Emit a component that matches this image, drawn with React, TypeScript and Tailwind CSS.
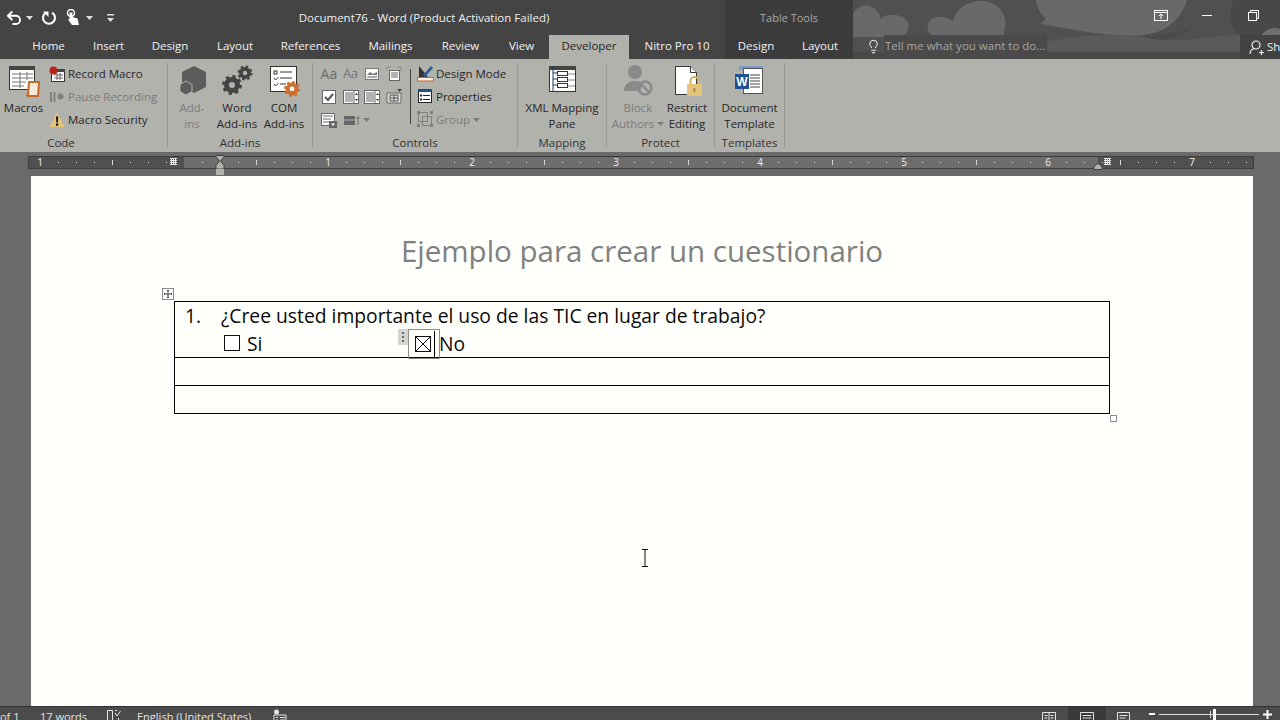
import { Undo2, Lightbulb } from 'lucide-react'
import type { ReactNode } from 'react'

const mainTabs = [
  { label: 'Home', width: 'w-[63px]' },
  { label: 'Insert', width: 'w-[57px]' },
  { label: 'Design', width: 'w-[66px]' },
  { label: 'Layout', width: 'w-[64px]' },
  { label: 'References', width: 'w-[87px]' },
  { label: 'Mailings', width: 'w-[73px]' },
  { label: 'Review', width: 'w-[67px]' },
  { label: 'View', width: 'w-[55px]' },
]

function Caret({ className = 'text-[#dddddd]' }: { className?: string }) {
  return (
    <svg width="7" height="4" viewBox="0 0 7 4" className={className}>
      <path d="M0 0h7L3.5 4z" fill="currentColor" />
    </svg>
  )
}

function Gear({ cx, cy, r, color }: { cx: number; cy: number; r: number; color: string }) {
  const outer = r * 0.82
  const dash = (2 * Math.PI * outer) / 16
  return (
    <g fill="none" stroke={color}>
      <circle cx={cx} cy={cy} r={r * 0.55} strokeWidth={r * 0.5} />
      <circle cx={cx} cy={cy} r={outer} strokeWidth={r * 0.36} strokeDasharray={`${dash} ${dash}`} />
    </g>
  )
}

function Icon({ w = 32, h = 32, children }: { w?: number; h?: number; children: ReactNode }) {
  return (
    <svg width={w} height={h} viewBox={`0 0 ${w} ${h}`} className="shrink-0">
      {children}
    </svg>
  )
}

function MacrosIcon() {
  return (
    <Icon w={34} h={32}>
      <rect x="2.500" y="1.500" width="25" height="23" fill="#fff" stroke="#333" />
      <rect x="2" y="1" width="26" height="4" fill="#444" />
      <path d="M5 9h21M5 13h21M5 17h14M5 21h12M13 7v16M20 7v8" stroke="#777" />
      <path d="M22 17h10l-1 14H21z" fill="#f6ead8" stroke="#c46a2c" strokeWidth="2" />
      <path d="M19 29h3v2h-3z" fill="#c46a2c" />
    </Icon>
  )
}

function RecordIcon() {
  return (
    <Icon w={16} h={16}>
      <rect x="2.500" y="3.500" width="13" height="12" fill="#fff" stroke="#333" />
      <rect x="2" y="3" width="14" height="3" fill="#444" />
      <path d="M5 9h9M5 12h9M8 7v7M11 7v7" stroke="#666" />
      <circle cx="4.500" cy="4.500" r="4" fill="#b3261e" />
    </Icon>
  )
}

function PauseIcon() {
  return (
    <Icon w={16} h={16}>
      <path d="M1 3h2v10H1zM4.500 3h2v10h-2z" fill="#808080" />
      <circle cx="11.500" cy="7.500" r="3" fill="#808080" />
    </Icon>
  )
}

function WarningIcon() {
  return (
    <Icon w={16} h={16}>
      <path d="M8 0.500l7.500 14.500H0.500z" fill="#e3c27b" />
      <path d="M7 4.500h2.200l-.3 6H7.300zM7 11.500h2.200v2.200H7z" fill="#111" />
    </Icon>
  )
}

function AddinsIcon() {
  return (
    <Icon>
      <path d="M18 1l12 6v15l-12 6-12-6V7z" fill="#5c5c5c" />
      <path d="M10 16l6 3.500v7L10 30l-6-3.500v-7z" fill="#5c5c5c" stroke="#b2b2ad" />
    </Icon>
  )
}

function WordAddinsIcon() {
  return (
    <Icon>
      <Gear cx={11} cy={20} r={10} color="#444" />
      <Gear cx={24} cy={8} r={7.500} color="#444" />
    </Icon>
  )
}

function ComAddinsIcon() {
  return (
    <Icon>
      <rect x="2.500" y="1.500" width="26" height="25" fill="#fff" stroke="#333" />
      <rect x="6" y="6" width="3" height="3" fill="none" stroke="#333" />
      <path d="M12 7h12M12 13h12M12 19h6M6 13l1.500 2 3-3M6 19l1.500 2 3-3" stroke="#333" fill="none" />
      <Gear cx={24} cy={24} r={8} color="#cc6f2e" />
    </Icon>
  )
}

function SmallDoc({ kind }: { kind: number }) {
  if (kind === 0) return <span className="text-[14px] leading-none text-[#6a6a6a]">Aa</span>
  if (kind === 1) return <span className="text-[13px] font-light leading-none text-[#555555]">Aa</span>
  if (kind === 2)
    return (
      <Icon w={16} h={16}>
        <rect x="1.500" y="2.500" width="13" height="11" fill="#fff" stroke="#777" />
        <path d="M3 9l3-3 3 2 4-2v3H3z" fill="#777" />
        <path d="M3 10h10v2H3z" fill="#aaa" />
      </Icon>
    )
  if (kind === 3)
    return (
      <Icon w={16} h={16}>
        <rect x="3.500" y="4.500" width="10" height="10" fill="#fff" stroke="#666" />
        <path d="M5 7h7M5 9h7M5 11h7" stroke="#666" />
        <path d="M1 5V1h4M11 1h4v4" stroke="#888" fill="none" />
      </Icon>
    )
  if (kind === 4)
    return (
      <Icon w={16} h={16}>
        <rect x="1.500" y="1.500" width="13" height="13" fill="#fff" stroke="#666" />
        <path d="M4 8l3 3 5-6" stroke="#555" strokeWidth="2" fill="none" />
      </Icon>
    )
  if (kind === 5 || kind === 6)
    return (
      <Icon w={16} h={16}>
        <rect x="0.500" y="1.500" width="15" height="13" fill="#fff" stroke="#666" />
        <path d="M2 4h8M2 6h8M2 8h8M2 10h8M2 12h8M11 2v12" stroke="#666" />
        <path d="M12 6l1.500-2L15 6zM12 10l1.500 2L15 10z" fill="#333" />
      </Icon>
    )
  if (kind === 7)
    return (
      <Icon w={16} h={16}>
        <path d="M1 4h14v10H1z" fill="#ddd" stroke="#666" />
        <path d="M4 6h8v6H4zM8 6v6M4 9h8" stroke="#555" fill="none" />
        <path d="M11 0h5l-2.500 3z" fill="#444" />
      </Icon>
    )
  if (kind === 8)
    return (
      <Icon w={18} h={16}>
        <rect x="1.500" y="1.500" width="13" height="12" fill="#fff" stroke="#666" />
        <path d="M3 4h10M3 7h8M3 10h6" stroke="#666" />
        <rect x="9" y="9" width="8" height="7" fill="#666" />
        <path d="M11 11.500h4L13 14z" fill="#fff" />
      </Icon>
    )
  return (
    <Icon w={18} h={16}>
      <rect x="1" y="4" width="11" height="9" rx="1" fill="#666" />
      <path d="M4 4V2h5v2M1 8h11" stroke="#b2b2ad" fill="none" />
      <path d="M15 13V5M13.500 7L15 4.500 16.500 7" stroke="#777" fill="none" />
    </Icon>
  )
}

function DesignModeIcon() {
  return (
    <Icon w={17} h={17}>
      <path d="M2 1v11h9z" fill="#333" />
      <path d="M6 10L14 1l2 2-8 9z" fill="#2a5d9a" />
      <rect x="0.500" y="12.500" width="16" height="3.500" fill="#f5ede0" stroke="#c46a2c" />
    </Icon>
  )
}

function PropertiesIcon() {
  return (
    <Icon w={17} h={17}>
      <rect x="1.500" y="1.500" width="13" height="13" fill="#fff" stroke="#222" />
      <rect x="1" y="1" width="14" height="3" fill="#1e4e86" />
      <path d="M6 7.500h7M6 11.500h7" stroke="#222" />
      <rect x="3" y="6.500" width="2" height="2" fill="#222" />
      <rect x="3" y="10.500" width="2" height="2" fill="#222" />
    </Icon>
  )
}

function GroupIcon() {
  return (
    <Icon w={17} h={17}>
      <rect x="1.500" y="1.500" width="9" height="9" fill="none" stroke="#808080" />
      <rect x="5.500" y="5.500" width="9" height="9" fill="none" stroke="#808080" />
      <path d="M0 0h3v3H0zM13 13h3v3h-3zM13 0h3v3h-3zM0 13h3v3H0z" fill="#808080" />
    </Icon>
  )
}

function XmlIcon() {
  return (
    <Icon w={30} h={30}>
      <rect x="2.500" y="1.500" width="26" height="25" fill="#fff" stroke="#333" />
      <rect x="2" y="1" width="27" height="4" fill="#444" />
      <path d="M6 1v25M6 8h4M6 14h4M6 20h4" stroke="#173a5e" />
      <rect x="10.500" y="6.500" width="10" height="4" fill="#fff" stroke="#173a5e" />
      <rect x="10.500" y="12.500" width="10" height="4" fill="#fff" stroke="#173a5e" />
      <rect x="10.500" y="18.500" width="10" height="4" fill="#fff" stroke="#173a5e" />
      <path d="M21 9h7M21 15h7M21 21h7" stroke="#888" />
    </Icon>
  )
}

function BlockIcon() {
  return (
    <Icon>
      <circle cx="13" cy="7" r="7" fill="#8a8a8a" />
      <path d="M2 26c0-7 5-10 11-10 4 0 7 1 8 3l-3 7z" fill="#8a8a8a" />
      <circle cx="23" cy="23" r="6.500" fill="none" stroke="#8a8a8a" strokeWidth="2.500" />
      <path d="M18.500 18.500l9 9" stroke="#8a8a8a" strokeWidth="2.500" />
    </Icon>
  )
}

function RestrictIcon() {
  return (
    <Icon>
      <path d="M4.500 1.500h15l6 6v22h-21z" fill="#fff" stroke="#333" />
      <path d="M19.500 1.500v6h6" fill="#fff" stroke="#333" />
      <rect x="16" y="19" width="15" height="12" fill="#e3c27b" />
      <path d="M19.500 19v-3a4 4 0 0 1 8 0v3" fill="none" stroke="#d2b26b" strokeWidth="2" />
      <rect x="22.500" y="23" width="2" height="4" fill="#a58846" />
    </Icon>
  )
}

function TemplateIcon() {
  return (
    <Icon>
      <rect x="5" y="1" width="24" height="4" fill="#7e9ccb" />
      <rect x="9.500" y="3.500" width="19" height="25" fill="#fff" stroke="#555" />
      <path d="M16 10h10M16 13h10M16 16h10M16 19h10M16 22h10" stroke="#444" />
      <rect x="1" y="9" width="14" height="15" fill="#234f93" />
      <text x="8" y="21" textAnchor="middle" fontSize="12" fontWeight="700" fill="#fff" fontFamily="'Liberation Sans', sans-serif">
        W
      </text>
    </Icon>
  )
}

function Sep() {
  return <div className="mt-[4px] h-[84px] w-px shrink-0 bg-[#989894]" />
}

function Group({ width, label, labelClass = 'text-center', children }: { width: string; label: string; labelClass?: string; children: ReactNode }) {
  return (
    <div className={`flex shrink-0 flex-col ${width}`}>
      <div className="flex h-[76px]">{children}</div>
      <div className={`h-[16px] text-[11.5px] leading-[16px] text-[#333333] ${labelClass}`}>{label}</div>
    </div>
  )
}

function TallButton({ width, icon, lines, disabled, caret }: { width: string; icon: ReactNode; lines: string[]; disabled?: boolean; caret?: boolean }) {
  return (
    <div className={`flex shrink-0 flex-col items-center ${width}`}>
      <div className="flex h-[41px] items-start justify-center pt-[6px]">{icon}</div>
      <div className={`text-center text-[11.5px] leading-[16px] whitespace-nowrap ${disabled ? 'text-[#7b7b7b]' : 'text-[#262626]'}`}>
        {lines.map((line, i) => (
          <div key={line} className="flex items-center justify-center gap-[3px]">
            {line}
            {caret && i === lines.length - 1 && <Caret className="text-[#7b7b7b]" />}
          </div>
        ))}
      </div>
    </div>
  )
}

function SmallRow({ icon, label, disabled, caret }: { icon: ReactNode; label: string; disabled?: boolean; caret?: boolean }) {
  return (
    <div className={`flex h-[23px] items-center text-[11.5px] whitespace-nowrap ${disabled ? 'text-[#7b7b7b]' : 'text-[#262626]'}`}>
      <span className="flex w-[19px] shrink-0 items-center">{icon}</span>
      {label}
      {caret && <Caret className="ml-[3px] text-[#7b7b7b]" />}
    </div>
  )
}

function TitleBackdrop() {
  return (
    <svg width="427" height="59" viewBox="853 0 427 59" className="absolute top-0 left-[853px]">
      <rect x="853" y="0" width="427" height="59" fill="#505050" />
      <g fill="#696969">
        <path d="M853 14c4-9 17-12 24-3 3 3 4 5 3 8 8-7 24-5 28 4 2 7-2 12-8 14H853z" />
        <path d="M931 35c-7-8-2-19 8-18 7 0 11 2 14 4 3-13 16-21 31-20 15 2 24 14 21 28l-2 6z" />
        <path d="M1036 0c1 8 4 14 10 18l-5 6 40 7c20 3 42 6 62 4 22-2 38-15 44-35z" />
      </g>
      <path d="M1146 34c14 2 30 0 41-5 3 0 0 3-4 5-10 5-24 6-37 3z" fill="#4a4a4a" />
      <path d="M1030 46c40-12 90-14 130-6 30 3 60-8 120-7v26H853v-6c70-5 120-4 177-7z" fill="#5a5a5a" />
      <circle cx="1258" cy="14" r="28" fill="#484848" />
      <path d="M1258 42c4-12 14-16 22-13v13z" fill="#707070" />
      <rect x="853" y="52" width="427" height="7" fill="#484848" />
    </svg>
  )
}

function Ruler() {
  const ticks = Array.from({ length: 68 }, (_, i) => i - 8)
    .filter((k) => k % 8 !== 0)
    .map((k) => ({ x: 156 + k * 18, tall: k % 8 === 4 || k % 8 === -4 }))
  const numbers = [
    { n: 1, x: 12 },
    { n: 1, x: 300 },
    { n: 2, x: 444 },
    { n: 3, x: 588 },
    { n: 4, x: 732 },
    { n: 5, x: 876 },
    { n: 6, x: 1020 },
    { n: 7, x: 1164 },
  ]
  return (
    <div className="relative ml-[28px] flex h-[13px] w-[1226px] border border-[#3e3e3e]">
      <div className="w-[155px] bg-[#505050]" />
      <div className="w-[914px] bg-[#6d6d6d]" />
      <div className="flex-1 bg-[#505050]" />
      <svg width="1226" height="13" className="absolute -top-px -left-px">
        {ticks.map((t) =>
          t.tall ? (
            <rect key={t.x} x={t.x} y="4" width="1" height="5" fill="#dddddd" />
          ) : (
            <rect key={t.x} x={t.x} y="6" width="1" height="1" fill="#dddddd" />
          ),
        )}
        <path d="M142 2.500h7M142 4.500h7M142 6.500h7M142 8.500h7M143.500 2v7M145.500 2v7M147.500 2v7" stroke="#e8e8e8" />
        <path d="M1076 2.500h7M1076 4.500h7M1076 6.500h7M1076 8.500h7M1077.500 2v7M1079.500 2v7M1081.500 2v7" stroke="#e8e8e8" />
      </svg>
      {numbers.map((item) => (
        <span
          key={item.x}
          className="absolute top-[-1px] w-[10px] text-center text-[10px] leading-[12px] text-[#f0f0f0]"
          style={{ left: item.x - 6 }}
        >
          {item.n}
        </span>
      ))}
      <svg width="10" height="21" viewBox="0 0 10 21" className="absolute top-[-2px] left-[186px]">
        <path d="M1 .5h8V2L5.500 6 9 10.500V14H1v-3.500L4.500 6 1 2z" fill="#b2b2ad" stroke="#444" />
        <rect x="1" y="14" width="8" height="6" fill="#b2b2ad" />
      </svg>
      <svg width="10" height="7" viewBox="0 0 10 7" className="absolute top-[6px] left-[1064px]">
        <path d="M5 .5L9 3.500v3H1v-3z" fill="#b2b2ad" stroke="#444" />
      </svg>
    </div>
  )
}

function StatusIcon({ children, active }: { children: ReactNode; active?: boolean }) {
  return <div className={`flex h-[22px] w-[38px] items-start justify-center pt-[4px] ${active ? 'bg-[#3a3a3a]' : ''}`}>{children}</div>
}

export default function App() {
  return (
    <div className="flex h-[720px] w-[1280px] flex-col overflow-hidden bg-[#6a6a6a] font-['Open_Sans',sans-serif]">
      <header className="relative h-[59px] shrink-0 bg-[#444444]">
        <TitleBackdrop />
        <div className="relative flex h-[35px]">
          <div className="flex w-[298px] shrink-0 items-center text-white">
            <Undo2 size={18} strokeWidth={2.500} className="ml-[5px]" />
            <Caret className="ml-[3px] text-[#e0e0e0]" />
            <svg width="16" height="16" viewBox="0 0 16 16" className="ml-[8px]">
              <path d="M5 2.600A6 6 0 1 0 11 2.600" fill="none" stroke="currentColor" strokeWidth="2" />
              <path d="M2 1.500h5.500V7z" fill="currentColor" />
            </svg>
            <svg width="14" height="17" viewBox="0 0 14 17" className="ml-[9px]">
              <circle cx="5" cy="4" r="3.500" fill="none" stroke="currentColor" strokeWidth="1.500" />
              <path d="M3.500 3.500h3V8l5 1.500L13 16H6L2 10.500l1.500-.5z" fill="currentColor" />
            </svg>
            <Caret className="ml-[6px] text-[#e0e0e0]" />
            <svg width="7" height="8" viewBox="0 0 7 8" className="ml-[14px] text-[#e0e0e0]">
              <path d="M0 0h7v1.500H0zM0 4h7L3.500 8z" fill="currentColor" />
            </svg>
          </div>
          <div className="w-[252px] shrink-0 pt-[9px] text-center text-[11.5px] leading-[17px] whitespace-nowrap text-[#f0f0f0]">
            Document76 - Word (Product Activation Failed)
          </div>
          <div className="w-[175px] shrink-0" />
          <div className="w-[128px] shrink-0 bg-[#3c3c3c] pt-[9px] text-center text-[11px] leading-[17px] text-[#a8a8a8]">Table Tools</div>
          <div className="flex flex-1 items-start justify-end pr-[4px] pt-[7px] text-white">
            <div className="flex w-[46px] justify-center">
              <svg width="14" height="11" viewBox="0 0 14 11" className="mt-[3px]">
                <rect x=".5" y=".5" width="13" height="10" fill="none" stroke="currentColor" />
                <path d="M0 2.500h14M7 9V4.500M5 6l2-2 2 2" fill="none" stroke="currentColor" />
              </svg>
            </div>
            <div className="flex w-[46px] justify-center">
              <span className="mt-[8px] h-px w-[10px] bg-white" />
            </div>
            <div className="flex w-[46px] justify-center">
              <svg width="11" height="11" viewBox="0 0 11 11" className="mt-[3px]">
                <rect x=".5" y="2.500" width="8" height="8" fill="none" stroke="currentColor" />
                <path d="M2.500 2.500v-2h8v8h-2" fill="none" stroke="currentColor" />
              </svg>
            </div>
          </div>
        </div>
        <div className="relative flex h-[24px] pl-[17px] text-[11.5px] leading-[22px] text-[#f2f2f2]">
          {mainTabs.map((tab) => (
            <div key={tab.label} className={`shrink-0 text-center ${tab.width}`}>
              {tab.label}
            </div>
          ))}
          <div className="w-[80px] shrink-0 bg-[#b2b2ad] text-center text-[#262626]">Developer</div>
          <div className="w-[96px] shrink-0 text-center">Nitro Pro 10</div>
          <div className="flex w-[128px] shrink-0 bg-[#3c3c3c]">
            <div className="w-[62px] text-center">Design</div>
            <div className="w-[66px] text-center">Layout</div>
          </div>
          <div className="flex w-[390px] shrink-0 items-start pl-[13px]">
            <Lightbulb size={15} strokeWidth={1.600} className="mt-[4px] shrink-0" />
            <div className="ml-[3px] h-[24px] w-[163px] bg-[#4a4a4a] pl-[1px] whitespace-nowrap text-[#a6a6a6]">Tell me what you want to do...</div>
            <div className="flex-1" />
          </div>
          <div className="ml-[-3px] flex h-[24px] w-[40px] shrink-0 items-center overflow-hidden bg-[#424242] pl-[9px]">
            <svg width="15" height="15" viewBox="0 0 15 15" className="shrink-0">
              <circle cx="7" cy="5" r="4" fill="none" stroke="currentColor" strokeWidth="1.200" />
              <path d="M1 14c0-3 2-5 4.500-5.500M10 12.500h5M12.500 10v5" fill="none" stroke="currentColor" strokeWidth="1.200" />
            </svg>
            <span className="ml-[3px]">Share</span>
          </div>
        </div>
      </header>

      <div className="flex h-[93px] shrink-0 bg-[#b2b2ad]">
        <Group width="w-[167px]" label="Code" labelClass="w-[122px] text-center">
          <TallButton width="w-[47px]" lines={['Macros']} icon={<MacrosIcon />} />
          <div className="ml-[2px] flex flex-col pt-[3px]">
            <SmallRow icon={<RecordIcon />} label="Record Macro" />
            <SmallRow icon={<PauseIcon />} label="Pause Recording" disabled />
            <SmallRow icon={<WarningIcon />} label="Macro Security" />
          </div>
        </Group>
        <Sep />
        <Group width="w-[144px]" label="Add-ins">
          <div className="flex pl-[4px]">
            <TallButton width="w-[40px]" lines={['Add-', 'ins']} icon={<AddinsIcon />} disabled />
            <TallButton width="w-[46px] ml-[2px]" lines={['Word', 'Add-ins']} icon={<WordAddinsIcon />} />
            <TallButton width="w-[46px] ml-[1px]" lines={['COM', 'Add-ins']} icon={<ComAddinsIcon />} />
          </div>
        </Group>
        <Sep />
        <Group width="w-[204px]" label="Controls">
          <div className="grid h-[72px] w-[92px] shrink-0 grid-cols-4 grid-rows-3 pl-[5px] pt-[3px]">
            {[0, 1, 2, 3, 4, 5, 6, 7, 8, 9].map((kind) => (
              <div key={kind} className="flex items-center justify-center">
                {kind === 9 ? (
                  <span className="ml-[12px] flex items-center gap-[2px]">
                    <SmallDoc kind={kind} />
                    <Caret className="text-[#7b7b7b]" />
                  </span>
                ) : (
                  <SmallDoc kind={kind} />
                )}
              </div>
            ))}
          </div>
          <div className="mt-[10px] ml-[5px] h-[55px] w-px bg-[#444444]" />
          <div className="ml-[6px] flex flex-col pt-[3px]">
            <SmallRow icon={<DesignModeIcon />} label="Design Mode" />
            <SmallRow icon={<PropertiesIcon />} label="Properties" />
            <SmallRow icon={<GroupIcon />} label="Group" disabled caret />
          </div>
        </Group>
        <Sep />
        <Group width="w-[88px]" label="Mapping">
          <TallButton width="w-[88px]" lines={['XML Mapping', 'Pane']} icon={<XmlIcon />} />
        </Group>
        <Sep />
        <Group width="w-[107px]" label="Protect">
          <div className="flex pl-[4px]">
            <TallButton width="w-[54px]" lines={['Block', 'Authors']} icon={<BlockIcon />} disabled caret />
            <TallButton width="w-[44px]" lines={['Restrict', 'Editing']} icon={<RestrictIcon />} />
          </div>
        </Group>
        <Sep />
        <Group width="w-[69px]" label="Templates">
          <TallButton width="w-[69px]" lines={['Document', 'Template']} icon={<TemplateIcon />} />
        </Group>
        <Sep />
      </div>

      <div className="flex h-[24px] shrink-0 items-start pt-[4px]">
        <Ruler />
      </div>

      <div className="flex h-[530px] shrink-0 pl-[31px]">
        <main className="relative w-[1222px] bg-[#fffffc]">
          <h1 className="pt-[55px] text-center text-[29.5px] leading-[40px] font-medium text-[#808080]">Ejemplo para crear un cuestionario</h1>
          <div className="relative mt-[30px] ml-[143px] w-[936px] border border-black text-[19.300px] leading-[28px] text-[#0a0a0a]">
            <div className="h-[56px] border-b border-black">
              <div className="flex pl-[10px]">
                <span className="w-[36px] shrink-0">1.</span>
                <span className="whitespace-nowrap">¿Cree usted importante el uso de las TIC en lugar de trabajo?</span>
              </div>
              <div className="flex h-[28px] items-center pl-[49px]">
                <svg width="16" height="16" viewBox="0 0 16 16" className="-mt-[2px] shrink-0">
                  <rect x=".5" y=".5" width="15" height="15" fill="none" stroke="#111" />
                </svg>
                <span className="ml-[7px] w-[161px] shrink-0">Si</span>
                <div className="relative z-10 flex h-[30px] w-[32px] shrink-0 items-center border border-[#8c8c8c] pl-[6px]">
                  <div className="absolute top-[-1px] left-[-11px] flex h-[16px] w-[10px] flex-col items-center justify-center gap-[2px] bg-[#d4d4d0]">
                    <span className="h-[2px] w-[2px] bg-[#666666]" />
                    <span className="h-[2px] w-[2px] bg-[#666666]" />
                    <span className="h-[2px] w-[2px] bg-[#666666]" />
                  </div>
                  <svg width="16" height="16" viewBox="0 0 16 16" className="shrink-0">
                    <rect x=".5" y=".5" width="15" height="15" fill="none" stroke="#111" />
                    <path d="M1 1l14 14M15 1L1 15" stroke="#111" />
                  </svg>
                  <span className="ml-[3px] h-[26px] w-px bg-black" />
                </div>
                <span className="ml-[-1px]">No</span>
              </div>
            </div>
            <div className="h-[28px] border-b border-black" />
            <div className="h-[27px]" />
            <div className="absolute top-[-14px] left-[-13px] flex h-[12px] w-[12px] items-center justify-center border border-[#8c8c8c] bg-white">
              <svg width="8" height="8" viewBox="0 0 8 8">
                <path d="M4 0v8M0 4h8M3 1l1-1 1 1M3 7l1 1 1-1M1 3L0 4l1 1M7 3l1 1-1 1" fill="none" stroke="#444" />
              </svg>
            </div>
            <div className="absolute right-[-8px] bottom-[-9px] h-[7px] w-[7px] border border-[#8c8c8c] bg-white" />
          </div>
          <svg width="8" height="18" viewBox="0 0 8 18" className="absolute top-[373px] left-[610px]">
            <path d="M1 .5h6M1 17.500h6M4 1v16" fill="none" stroke="#111" />
          </svg>
        </main>
      </div>

      <footer className="flex h-[22px] shrink-0 border-t border-[#333333] bg-[#4b4b4b] text-[11px] leading-[20px] whitespace-nowrap text-[#e4e4e4]">
        <div className="ml-[-1px] w-[41px] shrink-0 pl-[1px]">of 1</div>
        <div className="w-[66px] shrink-0">17 words</div>
        <div className="flex w-[31px] shrink-0 items-start pt-[2px]">
          <svg width="15" height="15" viewBox="0 0 15 15">
            <path d="M6.500 1.500h-5v12h5zM9 1.500h2M6.500 13.500h6V9M9 4l2 3 3.500-5" fill="none" stroke="currentColor" />
          </svg>
        </div>
        <div className="w-[136px] shrink-0">English (United States)</div>
        <div className="flex flex-1 items-start pt-[2px]">
          <svg width="14" height="14" viewBox="0 0 14 14">
            <circle cx="3.500" cy="3" r="2.500" fill="currentColor" />
            <path d="M1 6h12v8H1z" fill="none" stroke="currentColor" />
            <path d="M7 8.500h5M7 11h5M3 8.500h2M3 11h2" stroke="currentColor" />
          </svg>
        </div>
        <div className="flex shrink-0 items-start">
          <StatusIcon>
            <svg width="14" height="16" viewBox="0 0 14 16">
              <path d="M.5 1.500h13v14H.5zM7 1.500v14M2.500 4.500h3M2.500 7h3M2.500 9.500h3M8.500 4.500h3M8.500 7h3M8.500 9.500h3" fill="none" stroke="currentColor" />
            </svg>
          </StatusIcon>
          <StatusIcon active>
            <svg width="14" height="16" viewBox="0 0 14 16">
              <path d="M.5 1.500h13v14H.5zM2.500 4.500h9M2.500 7h9M2.500 9.500h9M2.500 12h9" fill="none" stroke="currentColor" />
            </svg>
          </StatusIcon>
          <StatusIcon>
            <svg width="16" height="16" viewBox="0 0 16 16">
              <path d="M.5 1.500h12v14H.5zM2.500 4.500h8M2.500 7h6M2.500 9.500h4" fill="none" stroke="currentColor" />
              <circle cx="12" cy="12.500" r="3.500" fill="#bbbbbb" />
            </svg>
          </StatusIcon>
          <div className="ml-[5px] flex h-[14px] w-[131px] items-center">
            <span className="h-[2px] w-[6px] bg-white" />
            <div className="relative ml-[4px] h-px w-[100px] bg-[#dddddd]">
              <span className="absolute top-[-3px] left-[51px] h-[7px] w-px bg-[#dddddd]" />
              <span className="absolute top-[-5px] left-[54px] h-[11px] w-[3px] bg-white" />
            </div>
            <svg width="9" height="9" viewBox="0 0 9 9" className="ml-[4px]">
              <path d="M0 4.500h9M4.500 0v9" stroke="white" strokeWidth="2" />
            </svg>
          </div>
        </div>
      </footer>
    </div>
  )
}
